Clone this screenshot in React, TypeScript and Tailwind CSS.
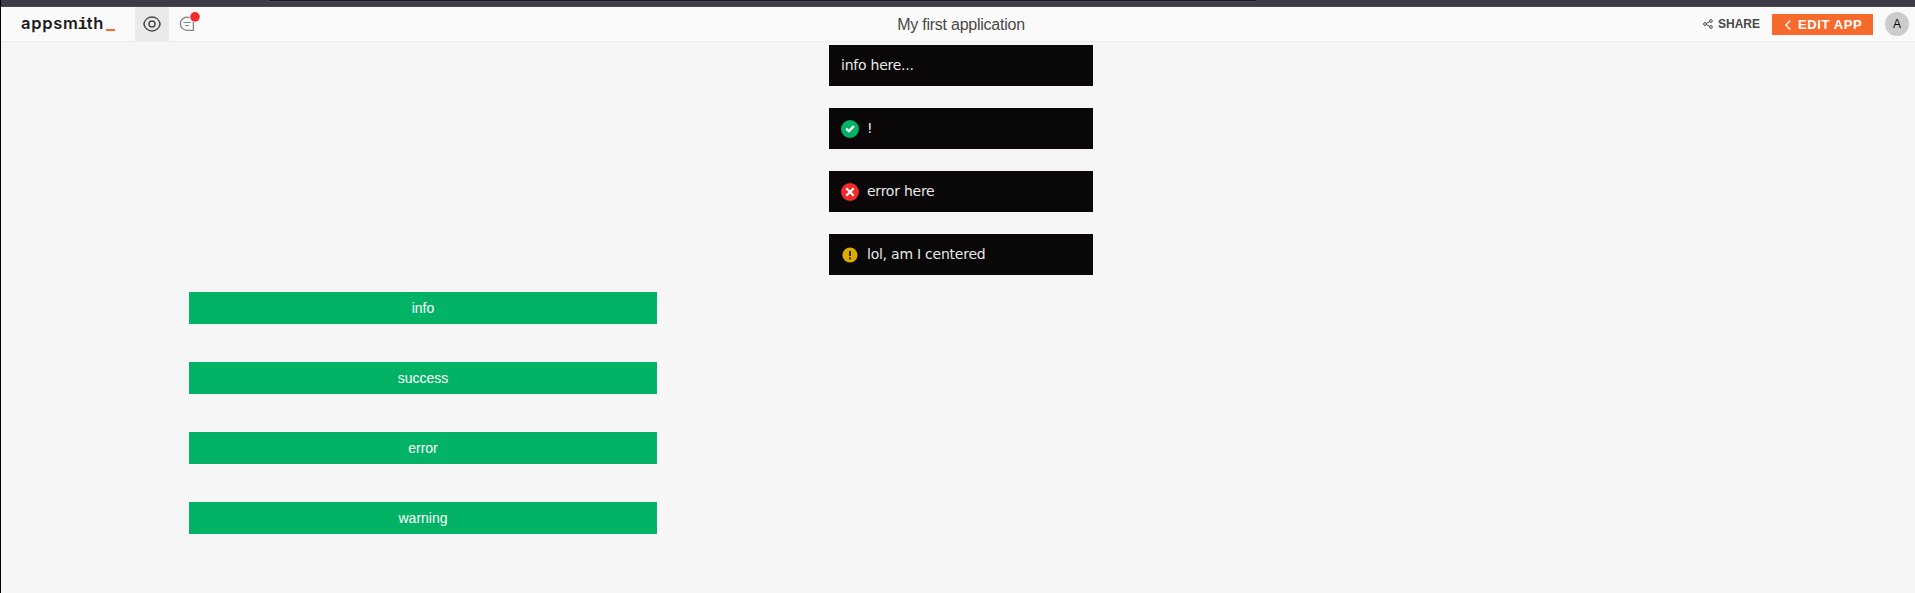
import type { ReactNode } from "react";

const actions = ["info", "success", "error", "warning"];

function SuccessIcon() {
  return (
    <svg width="18" height="18" viewBox="0 0 18 18" className="block">
      <circle cx="9" cy="9" r="9" fill="#03b365" />
      <path d="M5.2 8.6 L7.9 11.1 L12.9 6.1" fill="none" stroke="#fff" strokeWidth="2.3" />
    </svg>
  );
}

function ErrorIcon() {
  return (
    <svg width="18" height="18" viewBox="0 0 18 18" className="block">
      <circle cx="9" cy="9" r="9" fill="#f22b2b" />
      <path d="M5.3 5.3 L12.7 12.7 M12.7 5.3 L5.3 12.7" stroke="#fff" strokeWidth="2.2" />
    </svg>
  );
}

function WarningIcon() {
  return (
    <svg width="18" height="18" viewBox="0 0 18 18" className="block">
      <circle cx="9" cy="9" r="7.6" fill="#dcad00" />
      <path d="M8 5h2v5H8z M8 11.2h2v2H8z" fill="#3b2f02" />
    </svg>
  );
}

const toasts: { text: string; icon?: ReactNode }[] = [
  { text: "info here..." },
  { text: "!", icon: <SuccessIcon /> },
  { text: "error here", icon: <ErrorIcon /> },
  { text: "lol, am I centered", icon: <WarningIcon /> },
];

function Header() {
  return (
    <header className="flex h-[35px] shrink-0 border-b border-[#ececec] bg-[#fafafa]">
      <div className="flex flex-1 items-stretch">
        <div className="flex w-[134px] items-baseline pl-5 pt-[5px] font-['Inter',sans-serif] text-[16.5px] font-semibold leading-[22px] tracking-[0.7px] text-[#1c1c1c]">
          <span>appsm</span>
          <span className="-mx-px font-['Liberation_Mono',monospace] text-[17px] font-bold tracking-normal">i</span>
          <span>th</span>
          <span className="ml-[2px] h-[2px] w-[9px] translate-y-[2px] bg-[#f86a2b]" />
        </div>
        <div className="flex w-[34px] items-center justify-center bg-[#eaeaea]">
          <svg width="18" height="16" viewBox="0 0 18 16" fill="none" stroke="#4b4848" strokeWidth="1.5">
            <path d="M0.9 8C1.7 3.9 5 1.1 9 1.1S16.3 3.9 17.1 8C16.3 12.1 13 14.9 9 14.9S1.7 12.1 0.9 8Z" />
            <circle cx="9" cy="8" r="3" />
          </svg>
        </div>
        <div className="flex pl-2.5 pt-[3px]">
          <svg width="22" height="24" viewBox="0 0 22 24" fill="none">
            <path d="M14.4 20.3H8A6.6 6.6 0 0 1 8 7.1A6.4 6.4 0 0 1 14.4 13.7Z" stroke="#858282" strokeWidth="1.3" />
            <path d="M4.3 12.5H11.6 M6 15.5H10" stroke="#858282" strokeWidth="1.2" />
            <circle cx="16" cy="6.9" r="5.6" fill="#fafafa" />
            <circle cx="16" cy="6.9" r="4.8" fill="#f22b2b" />
          </svg>
        </div>
      </div>
      <h1 className="pl-3 pt-[6px] font-['Liberation_Sans',sans-serif] text-[16px] leading-6 tracking-[-0.24px] text-[#4b4848]">
        My first application
      </h1>
      <div className="flex flex-1 items-start justify-end pr-1.5 font-['Liberation_Sans',sans-serif]">
        <div className="mr-3 flex items-center gap-[5px] pt-2 text-[12px] font-bold leading-[18px] text-[#4b4848]">
          <svg width="10" height="10" viewBox="0 0 10 10" fill="none" stroke="#4b4848">
            <circle cx="2" cy="5" r="1.4" />
            <circle cx="7.9" cy="2" r="1.4" />
            <circle cx="7.9" cy="8" r="1.4" />
            <path d="M3.3 4.4L6.6 2.7M3.3 5.6L6.6 7.3" />
          </svg>
          <span>SHARE</span>
        </div>
        <div className="mr-3 mt-[7px] flex h-[21px] w-[101px] items-center bg-[#f86a2b] pl-[13px] text-[13px] font-bold leading-[21px] tracking-[0.6px] text-white">
          <svg width="6" height="10" viewBox="0 0 6 10" fill="none" stroke="#fff" strokeWidth="1.4" className="mr-[7px]">
            <path d="M5.2 0.6L0.9 5L5.2 9.4" />
          </svg>
          <span>EDIT APP</span>
        </div>
        <div className="mt-[5px] flex size-6 items-center justify-center rounded-full bg-[#cccccc] text-[12px] text-[#090707]">
          A
        </div>
      </div>
    </header>
  );
}

export default function App() {
  return (
    <div className="flex h-[593px] w-full flex-col overflow-hidden border-l border-black bg-[#f6f6f6]">
      <div className="h-[7px] shrink-0 border-b border-[#4a4954] bg-[#3c3b47] pl-[269px]">
        <div className="h-[2px] w-[986px] border-b border-[#4a4954] bg-[#181624]" />
      </div>
      <Header />
      <main className="flex items-start">
        <div className="ml-[188px] mt-[250px] flex w-[468px] flex-col gap-[38px]">
          {actions.map((label) => (
            <button
              key={label}
              className="h-8 bg-[#03b365] font-['Liberation_Sans',sans-serif] text-[14px] leading-8 text-white"
            >
              {label}
            </button>
          ))}
        </div>
        <div className="ml-[172px] mt-[3px] flex w-[264px] flex-col gap-[22px]">
          {toasts.map((toast) => (
            <div
              key={toast.text}
              className="flex h-[41px] items-center gap-2 bg-[#090707] px-3 font-['DejaVu_Sans',sans-serif] text-[14px] leading-[19px] tracking-[-0.24px] text-[#e8e8e8]"
            >
              {toast.icon && <span className="pt-px">{toast.icon}</span>}
              <span>{toast.text}</span>
            </div>
          ))}
        </div>
      </main>
    </div>
  );
}
